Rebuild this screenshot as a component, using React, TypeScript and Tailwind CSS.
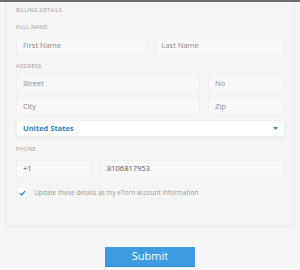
import React from 'react';

function Label({ children, className = '' }: { children: React.ReactNode; className?: string }) {
  return (
    <div className={`text-[5.5px] leading-[8px] uppercase tracking-[0.2px] text-[#a0a0a0] ${className}`}>
      {children}
    </div>
  );
}

function Field({ text, value, className = '' }: { text: string; value?: boolean; className?: string }) {
  return (
    <div
      className={`h-[18px] flex items-center pl-[6px] bg-[#f8f8f8] border border-[#efefef] text-[7.5px] ${
        value ? 'text-[#555]' : 'text-[#8c8c8c]'
      } ${className}`}
    >
      {text}
    </div>
  );
}

export default function App() {
  return (
    <div
      className="w-[300px] h-[270px] bg-[#f6f6f6] border-t-2 border-[#6e6e6e] flex flex-col overflow-hidden"
      style={{ fontFamily: '"Open Sans", "Liberation Sans", sans-serif' }}
    >
      {/* Billing panel */}
      <div className="mx-[5px] h-[225px] bg-[#f5f5f5] border-x border-b border-[#ebebeb] pl-[10px] pr-[9px] pt-[4px] flex flex-col">
        <Label>Billing details</Label>

        <Label className="mt-[9px]">Full name</Label>
        <div className="mt-[6px] flex gap-[8px]">
          <Field text="First Name" className="flex-1" />
          <Field text="Last Name" className="flex-1" />
        </div>

        <Label className="mt-[7px]">Address</Label>
        <div className="mt-[5px] flex gap-[8px]">
          <Field text="Street" className="w-[184px]" />
          <Field text="No" className="flex-1" />
        </div>
        <div className="mt-[5px] flex gap-[8px]">
          <Field text="City" className="w-[184px]" />
          <Field text="Zip" className="flex-1" />
        </div>
        <div className="mt-[4px] h-[17px] flex items-center justify-between pl-[6px] pr-[6px] bg-white shadow-[0_1px_2px_rgba(0,0,0,0.08)] border border-[#f0f0f0]">
          <span className="text-[7.5px] font-bold text-[#1f7fc4]">United States</span>
          <svg width="5" height="3" viewBox="0 0 5 3">
            <path d="M0 0 L5 0 L2.5 3 Z" fill="#2a8ad0" />
          </svg>
        </div>

        <Label className="mt-[8px]">Phone</Label>
        <div className="mt-[7px] flex gap-[8px]">
          <Field text="+1" value className="w-[76px]" />
          <Field text="8106817953" value className="flex-1" />
        </div>

        <div className="mt-[9px] flex items-center gap-[6px] pl-[1px]">
          <div className="w-[11px] h-[11px] bg-white border border-[#efefef] rounded-[2px] flex items-center justify-center">
            <svg width="7" height="6" viewBox="0 0 7 6">
              <path d="M0.8 3.2 L2.7 5 L6.2 0.9" fill="none" stroke="#2a8ad0" strokeWidth="1.3" />
            </svg>
          </div>
          <span className="text-[6.5px] text-[#9a9a9a]">Update these details as my eToro account information</span>
        </div>
      </div>

      {/* Footer */}
      <div className="flex justify-center pt-[20px]">
        <button className="w-[90px] h-[20px] bg-[#3d9be2] text-white text-[11px] font-medium border-b border-[#2f86c9]">
          Submit
        </button>
      </div>
    </div>
  );
}
